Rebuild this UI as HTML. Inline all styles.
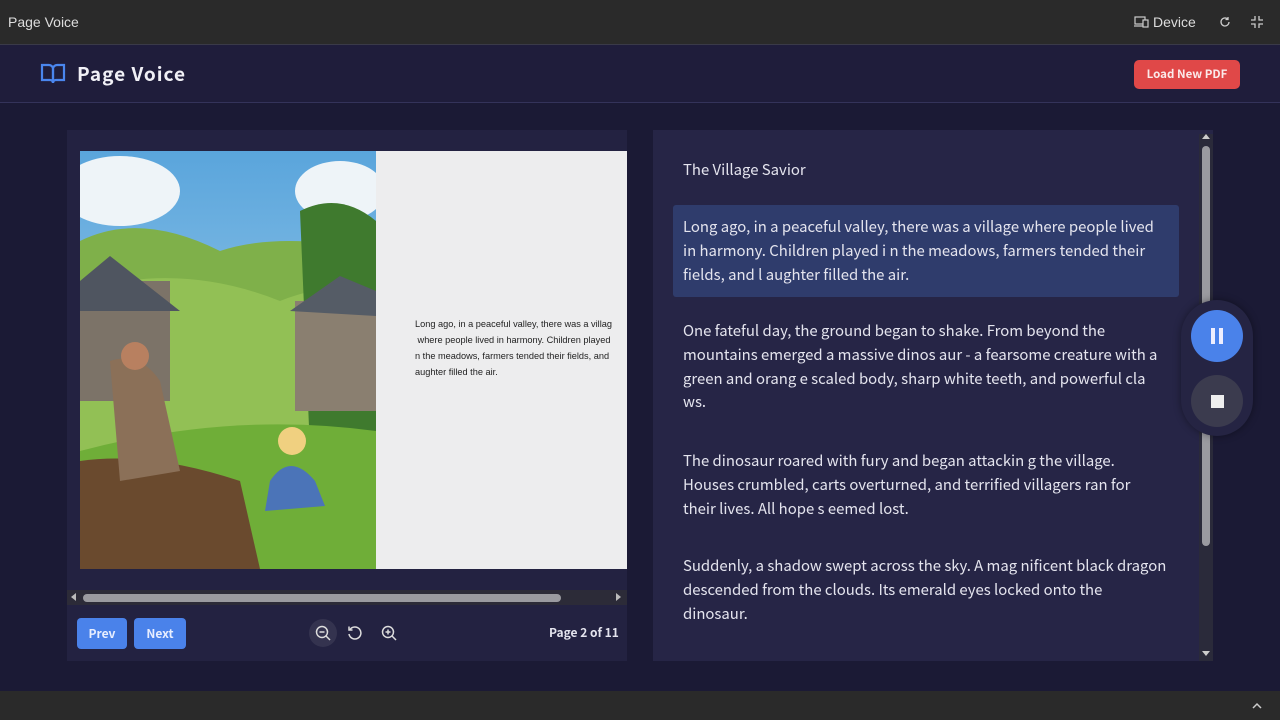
<!DOCTYPE html>
<html><head><meta charset="utf-8"><style>
*{margin:0;padding:0;box-sizing:border-box}
body{width:1280px;height:720px;overflow:hidden;background:#1b1a35;font-family:"Liberation Sans",sans-serif;position:relative}
.n{font-family:"Noto Sans CJK JP","DejaVu Sans",sans-serif}
.top{position:absolute;left:0;top:0;width:1280px;height:45px;background:#2a2a2a;border-bottom:1px solid #3a3a48;color:#ddd;font-size:14px}
.hdr{position:absolute;left:0;top:45px;width:1280px;height:58px;background:#1f1d3b;border-bottom:1px solid #34335a}
.bot{position:absolute;left:0;top:691px;width:1280px;height:29px;background:#2a2a2a}
.lp{position:absolute;left:67px;top:130px;width:560px;height:531px;background:#232241}
.rp{position:absolute;left:653px;top:130px;width:560px;height:531px;background:#262546}
.txt{position:absolute;left:683px;color:#e4e4ee;font-family:"Noto Sans CJK JP","DejaVu Sans",sans-serif;font-size:14.9px;line-height:23.8px;width:484.5px}
.btn{position:absolute;top:618px;height:31px;background:#4a82ea;color:#e8eeff;font-size:12px;font-weight:bold;border-radius:4px;text-align:center;line-height:31px}
</style></head><body>
<div class="top"><span style="position:absolute;left:8px;top:14px">Page Voice</span>
<svg style="position:absolute;left:1134px;top:16px" width="15" height="12" viewBox="0 0 15 12" fill="none" stroke="#ccc" stroke-width="1.2"><rect x="1" y="1" width="10" height="7"/><path d="M0 10h9"/><rect x="9" y="4" width="5" height="7" fill="#2a2a2a"/></svg>
<span style="position:absolute;left:1153px;top:14px">Device</span>
<svg style="position:absolute;left:1219px;top:16px" width="12" height="12" viewBox="0 0 12 12" fill="none" stroke="#ccc" stroke-width="1.3"><path d="M10 6a4 4 0 1 1-1.2-2.9"/><path d="M9 1v2.5H6.5"/></svg>
<svg style="position:absolute;left:1251px;top:16px" width="12" height="12" viewBox="0 0 12 12" fill="none" stroke="#ccc" stroke-width="1.3"><path d="M4 0v4H0M8 0v4h4M4 12V8H0M8 12V8h4"/></svg>
</div>
<div class="hdr">
<svg style="position:absolute;left:40px;top:17px" width="26" height="24" viewBox="0 0 26 24" fill="none" stroke="#4a86ee" stroke-width="2.2"><path d="M2 3h7a4 4 0 0 1 4 4v14a3 3 0 0 0-3-3H2z"/><path d="M24 3h-7a4 4 0 0 0-4 4v14a3 3 0 0 1 3-3h8z"/></svg>
<span class="n" style="position:absolute;left:77px;top:15px;line-height:28px;color:#f0f0f6;font-weight:bold;font-size:19px;letter-spacing:1px">Page Voice</span>
<div class="n" style="position:absolute;left:1134px;top:15px;width:106px;height:29px;background:#e04848;border-radius:5px;color:#fbeaea;font-size:11.5px;font-weight:bold;text-align:center;line-height:29px">Load New PDF</div>
</div>
<div class="lp"></div>
<svg style="position:absolute;left:80px;top:151px" width="296" height="418" viewBox="0 0 296 418">
<defs><linearGradient id="sky" x1="0" y1="0" x2="0" y2="1"><stop offset="0" stop-color="#5aa5dc"/><stop offset="1" stop-color="#b8dcf0"/></linearGradient></defs>
<rect width="296" height="418" fill="url(#sky)"/>
<ellipse cx="40" cy="40" rx="60" ry="35" fill="#eef4f8"/><ellipse cx="260" cy="40" rx="45" ry="30" fill="#eef4f8"/>
<path d="M0 90 Q60 60 140 100 Q200 80 296 100 V418 H0z" fill="#7fb04a"/>
<path d="M0 140 Q100 110 200 150 Q250 130 296 140 V418 H0z" fill="#92c055"/>
<path d="M220 60 Q260 40 296 70 V300 H230z" fill="#3f7a2e"/>
<rect x="0" y="130" width="90" height="120" fill="#7c7368"/><path d="M0 130 L30 105 L100 160 H0z" fill="#4f5560"/>
<rect x="215" y="150" width="81" height="110" fill="#8a7f70"/><path d="M210 160 L260 125 L296 140 V165z" fill="#555c66"/>
<path d="M0 300 Q150 260 296 280 V418 H0z" fill="#6fae38"/>
<path d="M0 310 Q70 300 160 330 L180 418 H0z" fill="#6a4a2e"/>
<path d="M30 210 Q60 200 80 230 L100 320 L40 330z" fill="#8b7058"/>
<circle cx="55" cy="205" r="14" fill="#b88060"/>
<path d="M190 330 Q210 300 235 330 L245 355 L185 360z" fill="#4b74b8"/><circle cx="212" cy="290" r="14" fill="#f0d080"/>
</svg>
<div style="position:absolute;left:376px;top:151px;width:251px;height:418px;background:#ededee;overflow:hidden">
<div style="position:absolute;left:39px;top:165px;width:260px;font-size:9.2px;line-height:16px;color:#222;white-space:nowrap">Long ago, in a peaceful valley, there was a villag<br>&nbsp;where people lived in harmony. Children played<br>n the meadows, farmers tended their fields, and<br>aughter filled the air.</div></div>
<div style="position:absolute;left:67px;top:590px;width:560px;height:15px;background:#2c2b38"></div>
<div style="position:absolute;left:83px;top:594px;width:478px;height:8px;border-radius:4px;background:#9a9aa0"></div>
<div style="position:absolute;left:71px;top:593px;border:4px solid transparent;border-right:5px solid #bbb;border-left:0"></div>
<div style="position:absolute;left:616px;top:593px;border:4px solid transparent;border-left:5px solid #bbb;border-right:0"></div>
<div class="btn n" style="left:77px;width:50px">Prev</div>
<div class="btn n" style="left:134px;width:52px">Next</div>
<div style="position:absolute;left:309px;top:619px;width:28px;height:28px;border-radius:14px;background:#34334f"></div>
<svg style="position:absolute;left:315px;top:625px" width="16" height="16" viewBox="0 0 16 16" fill="none" stroke="#ddd" stroke-width="1.5"><circle cx="7" cy="7" r="5.5"/><path d="M11 11l4 4M4.5 7h5"/></svg>
<svg style="position:absolute;left:347px;top:625px" width="16" height="16" viewBox="0 0 16 16" fill="none" stroke="#ddd" stroke-width="1.5"><path d="M3 4.5A6 6 0 1 1 2 9"/><path d="M2 1.5v3.5h3.5"/></svg>
<svg style="position:absolute;left:381px;top:625px" width="16" height="16" viewBox="0 0 16 16" fill="none" stroke="#ddd" stroke-width="1.5"><circle cx="7" cy="7" r="5.5"/><path d="M11 11l4 4M4.5 7h5M7 4.5v5"/></svg>
<div class="n" style="position:absolute;left:549px;top:624px;line-height:18px;color:#e4e4ee;font-size:12px;font-weight:bold">Page 2 of 11</div>
<div class="rp"></div>
<div style="position:absolute;left:673px;top:205px;width:506px;height:92px;background:#2f3c6c;border-radius:3px"></div>
<div class="txt" style="top:158px">The Village Savior</div>
<div class="txt" style="top:215px">Long ago, in a peaceful valley, there was a village where people lived in harmony. Children played i n the meadows, farmers tended their fields, and l aughter filled the air.</div>
<div class="txt" style="top:319px">One fateful day, the ground began to shake. From beyond the mountains emerged a massive dinos aur - a fearsome creature with a green and orang e scaled body, sharp white teeth, and powerful cla ws.</div>
<div class="txt" style="top:449px">The dinosaur roared with fury and began attackin g the village.<br>Houses crumbled, carts overturned, and terrified villagers ran for<br>their lives. All hope s eemed lost.</div>
<div class="txt" style="top:554px">Suddenly, a shadow swept across the sky. A mag nificent black dragon descended from the clouds. Its emerald eyes locked onto the dinosaur.</div>
<div style="position:absolute;left:1199px;top:134px;width:14px;height:527px;background:#2a2a3a"></div>
<div style="position:absolute;left:1202px;top:146px;width:8px;height:400px;border-radius:4px;background:#9a9aa0"></div>
<div style="position:absolute;left:1202px;top:134px;border:4px solid transparent;border-bottom:5px solid #ccc;border-top:0"></div>
<div style="position:absolute;left:1202px;top:651px;border:4px solid transparent;border-top:5px solid #ccc;border-bottom:0"></div>
<div style="position:absolute;left:1181px;top:300px;width:72px;height:136px;border-radius:36px;background:#252443;box-shadow:0 0 8px rgba(0,0,0,.4)"></div>
<div style="position:absolute;left:1191px;top:310px;width:52px;height:52px;border-radius:26px;background:#4a82ea"></div>
<div style="position:absolute;left:1211px;top:328px;width:4px;height:16px;background:#eef"></div>
<div style="position:absolute;left:1219px;top:328px;width:4px;height:16px;background:#eef"></div>
<div style="position:absolute;left:1191px;top:375px;width:52px;height:52px;border-radius:26px;background:#3b3b4e"></div>
<div style="position:absolute;left:1211px;top:395px;width:13px;height:13px;background:#eee"></div>
<div class="bot"><svg style="position:absolute;left:1252px;top:11px" width="10" height="7" viewBox="0 0 10 7" fill="none" stroke="#ccc" stroke-width="1.5"><path d="M1 6l4-4 4 4"/></svg></div>
</body></html>
